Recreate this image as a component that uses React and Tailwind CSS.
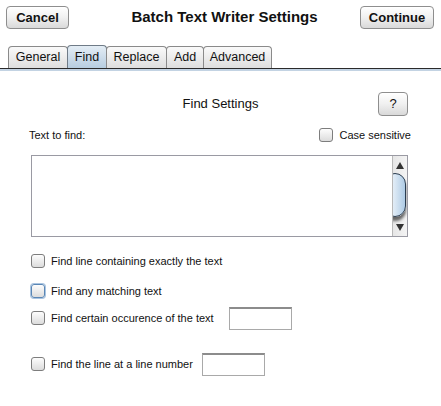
import React from 'react';

const font = { fontFamily: '"Liberation Sans", Arial, sans-serif' };

function Btn({ children, className = '' }) {
  return (
    <button className={`h-[23px] rounded-[4px] border border-[#8e8e8e] bg-gradient-to-b from-[#ffffff] via-[#f0f0f0] to-[#d9d9d9] text-[13px] font-bold text-[#111] shadow-[inset_0_1px_0_#fff] ${className}`}>
      {children}
    </button>
  );
}

function Check({ focus }) {
  return (
    <span
      className={`inline-block w-[14px] h-[14px] shrink-0 rounded-[3px] border bg-gradient-to-b from-[#fdfdfd] to-[#dcdcdc] ${
        focus ? 'border-[#5a86b5] shadow-[0_0_0_1px_#a9c4e0]' : 'border-[#7d7d7d]'
      }`}
    />
  );
}

function Field({ className = '' }) {
  return <div className={`h-[23px] w-[63px] border border-[#a9a9a9] border-t-[#8c8c8c] border-t-2 bg-white ${className}`} />;
}

const tabs = [
  ['General', 'w-[60px]'],
  ['Find', 'w-[40px]'],
  ['Replace', 'w-[61px]'],
  ['Add', 'w-[38px]'],
  ['Advanced', 'w-[69px]'],
];

export default function App() {
  return (
    <div className="w-[441px] h-[406px] bg-white text-[#111] overflow-hidden" style={font}>
      {/* header */}
      <div className="flex items-center justify-between pl-[6px] pr-[7px] pt-[6px]">
        <Btn className="w-[63px]">Cancel</Btn>
        <div className="text-[15px] font-bold ml-[20px]">Batch Text Writer Settings</div>
        <Btn className="w-[74px]">Continue</Btn>
      </div>

      {/* tabs */}
      <div className="flex pl-[8px] mt-[17px] h-[22px] items-end">
        {tabs.map(([t, w]) => (
          <div
            key={t}
            className={`${w} h-[22px] flex items-center justify-center text-[12.5px] border border-b-0 rounded-t-[4px] -ml-px first:ml-0 ${
              t === 'Find'
                ? 'border-[#6f7b87] bg-gradient-to-b from-[#e4edf5] to-[#b7cde0] h-[23px]'
                : 'border-[#8a8a8a] bg-gradient-to-b from-[#fafafa] to-[#dedede]'
            }`}
          >
            {t}
          </div>
        ))}
      </div>
      <div className="h-px bg-[#2a2a2a]" />
      <div className="h-[2px] bg-[#c3d3e3]" />

      {/* Find settings header */}
      <div className="grid grid-cols-[1fr_auto_1fr] items-center px-[33px] mt-[21px]">
        <div />
        <div className="text-[13px]">Find Settings</div>
        <Btn className="w-[30px] h-[24px] justify-self-end font-normal text-[13px]">?</Btn>
      </div>

      {/* text to find row */}
      <div className="flex items-center justify-between pl-[29px] pr-[30px] mt-[12px] h-[14px]">
        <span className="text-[11px]">Text to find:</span>
        <div className="flex items-center gap-[6px]">
          <Check />
          <span className="text-[11px]">Case sensitive</span>
        </div>
      </div>

      {/* textarea */}
      <div className="ml-[31px] mt-[13px] w-[377px] h-[82px] border border-[#9a9aa3] flex">
        <div className="flex-1 bg-white" />
        <div className="w-[15px] border-l border-[#b8b8b8] bg-gradient-to-r from-[#e6e6e6] to-[#f4f4f4] flex flex-col items-center relative overflow-hidden">
          <svg width="8" height="7" viewBox="0 0 8 7" className="mt-[6px]">
            <path d="M4 0 L8 7 L0 7 Z" fill="#333" />
          </svg>
          <div className="absolute left-[-9px] top-[17px] w-[22px] h-[44px] rounded-full border border-[#2b3d50] bg-gradient-to-r from-[#ffffff] via-[#dbe8f4] to-[#aecbe5] shadow-[0_4px_3px_#666]" />
          <svg width="8" height="7" viewBox="0 0 8 7" className="mt-auto mb-[5px]">
            <path d="M0 0 L8 0 L4 7 Z" fill="#333" />
          </svg>
        </div>
      </div>

      {/* options */}
      <div className="pl-[31px] mt-[12px] text-[11px]">
        <div className="flex items-center gap-[6px] h-[24px]">
          <Check />
          <span>Find line containing exactly the text</span>
        </div>
        <div className="flex items-center gap-[6px] h-[24px] mt-[6px]">
          <Check focus />
          <span>Find any matching text</span>
        </div>
        <div className="flex items-center h-[24px] mt-[3px]">
          <Check />
          <span className="ml-[6px]">Find certain occurence of the text</span>
          <Field className="ml-[15px]" />
        </div>
        <div className="flex items-center h-[24px] mt-[22px]">
          <Check />
          <span className="ml-[6px]">Find the line at a line number</span>
          <Field className="ml-[9px]" />
        </div>
      </div>
    </div>
  );
}
